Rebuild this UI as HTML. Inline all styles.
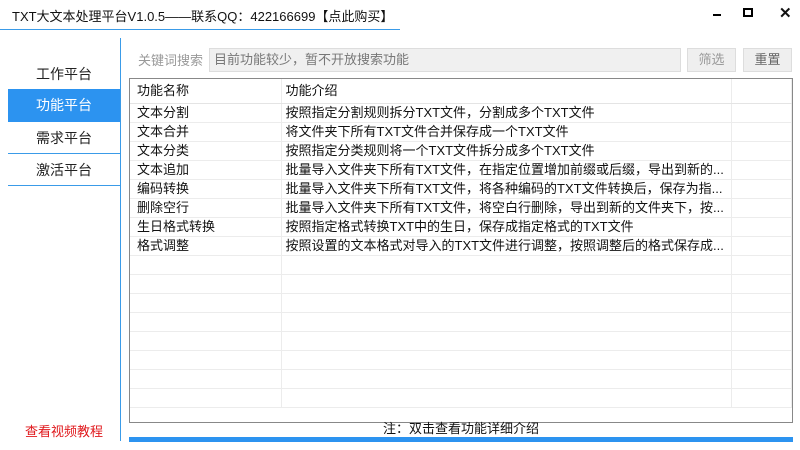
<!DOCTYPE html>
<html><head><meta charset="utf-8"><style>
*{margin:0;padding:0;box-sizing:border-box}
body{width:800px;height:450px;background:#fff;font-family:"Liberation Sans","Noto Sans CJK SC",sans-serif;font-size:13px;color:#111;position:relative;overflow:hidden}
.a{position:absolute}
.nav{position:absolute;left:8px;width:112px;height:32px;line-height:32px;text-align:center;font-size:14px;color:#222}
table{border-collapse:collapse;position:absolute;left:130px;top:79px;width:662px;table-layout:fixed}
td{height:19px;border-bottom:1px solid #ececec;border-right:1px solid #ececec;padding-left:7px;white-space:nowrap;overflow:hidden;line-height:18px}
td+td{padding-left:4px}
tr.h td{height:24px;border-bottom:1px solid #e4e4e4}
</style></head><body>
<div class="a" style="left:12px;top:6px;font-size:13px;color:#111">TXT大文本处理平台V1.0.5——联系QQ：422166699【点此购买】</div>
<div class="a" style="left:0;top:29px;width:400px;height:1px;background:#3a9be8"></div>
<div class="a" style="left:713px;top:14px;width:8px;height:2px;background:#000"></div>
<div class="a" style="left:743px;top:8px;width:10px;height:9px;border:2px solid #000"></div>
<div class="a" style="left:779px;top:4px;font-size:15px;font-weight:bold">✕</div>
<div class="a" style="left:120px;top:38px;width:1px;height:403px;background:#3a9be8"></div>
<div class="nav" style="top:58px">工作平台</div>
<div class="nav" style="top:89px;height:33px;background:#2c93f0;color:#fff;line-height:33px">功能平台</div>
<div class="nav" style="top:122px;border-bottom:1px solid #3a9be8">需求平台</div>
<div class="nav" style="top:154px;border-bottom:1px solid #3a9be8">激活平台</div>
<div class="a" style="left:25px;top:421px;color:#e0181c;font-size:13px">查看视频教程</div>
<div class="a" style="left:138px;top:50px;color:#999">关键词搜索</div>
<div class="a" style="left:209px;top:48px;width:472px;height:24px;border:1px solid #ddd;background:#f0f0f0;color:#777;padding-left:4px;line-height:22px">目前功能较少，暂不开放搜索功能</div>
<div class="a" style="left:687px;top:48px;width:49px;height:24px;border:1px solid #ddd;background:#efefef;color:#999;text-align:center;line-height:22px">筛选</div>
<div class="a" style="left:743px;top:48px;width:49px;height:24px;border:1px solid #ddd;background:#efefef;color:#666;text-align:center;line-height:22px">重置</div>
<div class="a" style="left:129px;top:78px;width:664px;height:345px;border:1px solid #888"></div>
<table>
<colgroup><col style="width:151px"><col style="width:450px"><col></colgroup>
<tr class="h"><td>功能名称</td><td>功能介绍</td><td></td></tr>
<tr><td>文本分割</td><td>按照指定分割规则拆分TXT文件，分割成多个TXT文件</td><td></td></tr>
<tr><td>文本合并</td><td>将文件夹下所有TXT文件合并保存成一个TXT文件</td><td></td></tr>
<tr><td>文本分类</td><td>按照指定分类规则将一个TXT文件拆分成多个TXT文件</td><td></td></tr>
<tr><td>文本追加</td><td>批量导入文件夹下所有TXT文件，在指定位置增加前缀或后缀，导出到新的...</td><td></td></tr>
<tr><td>编码转换</td><td>批量导入文件夹下所有TXT文件，将各种编码的TXT文件转换后，保存为指...</td><td></td></tr>
<tr><td>删除空行</td><td>批量导入文件夹下所有TXT文件，将空白行删除，导出到新的文件夹下，按...</td><td></td></tr>
<tr><td>生日格式转换</td><td>按照指定格式转换TXT中的生日，保存成指定格式的TXT文件</td><td></td></tr>
<tr><td>格式调整</td><td>按照设置的文本格式对导入的TXT文件进行调整，按照调整后的格式保存成...</td><td></td></tr>
<tr><td></td><td></td><td></td></tr><tr><td></td><td></td><td></td></tr><tr><td></td><td></td><td></td></tr><tr><td></td><td></td><td></td></tr><tr><td></td><td></td><td></td></tr><tr><td></td><td></td><td></td></tr><tr><td></td><td></td><td></td></tr><tr><td></td><td></td><td></td></tr>
</table>
<div class="a" style="left:129px;top:421px;width:664px;text-align:center;line-height:16px">注：双击查看功能详细介绍</div>
<div class="a" style="left:129px;top:437px;width:664px;height:5px;background:#2c93f0"></div>
</body></html>
